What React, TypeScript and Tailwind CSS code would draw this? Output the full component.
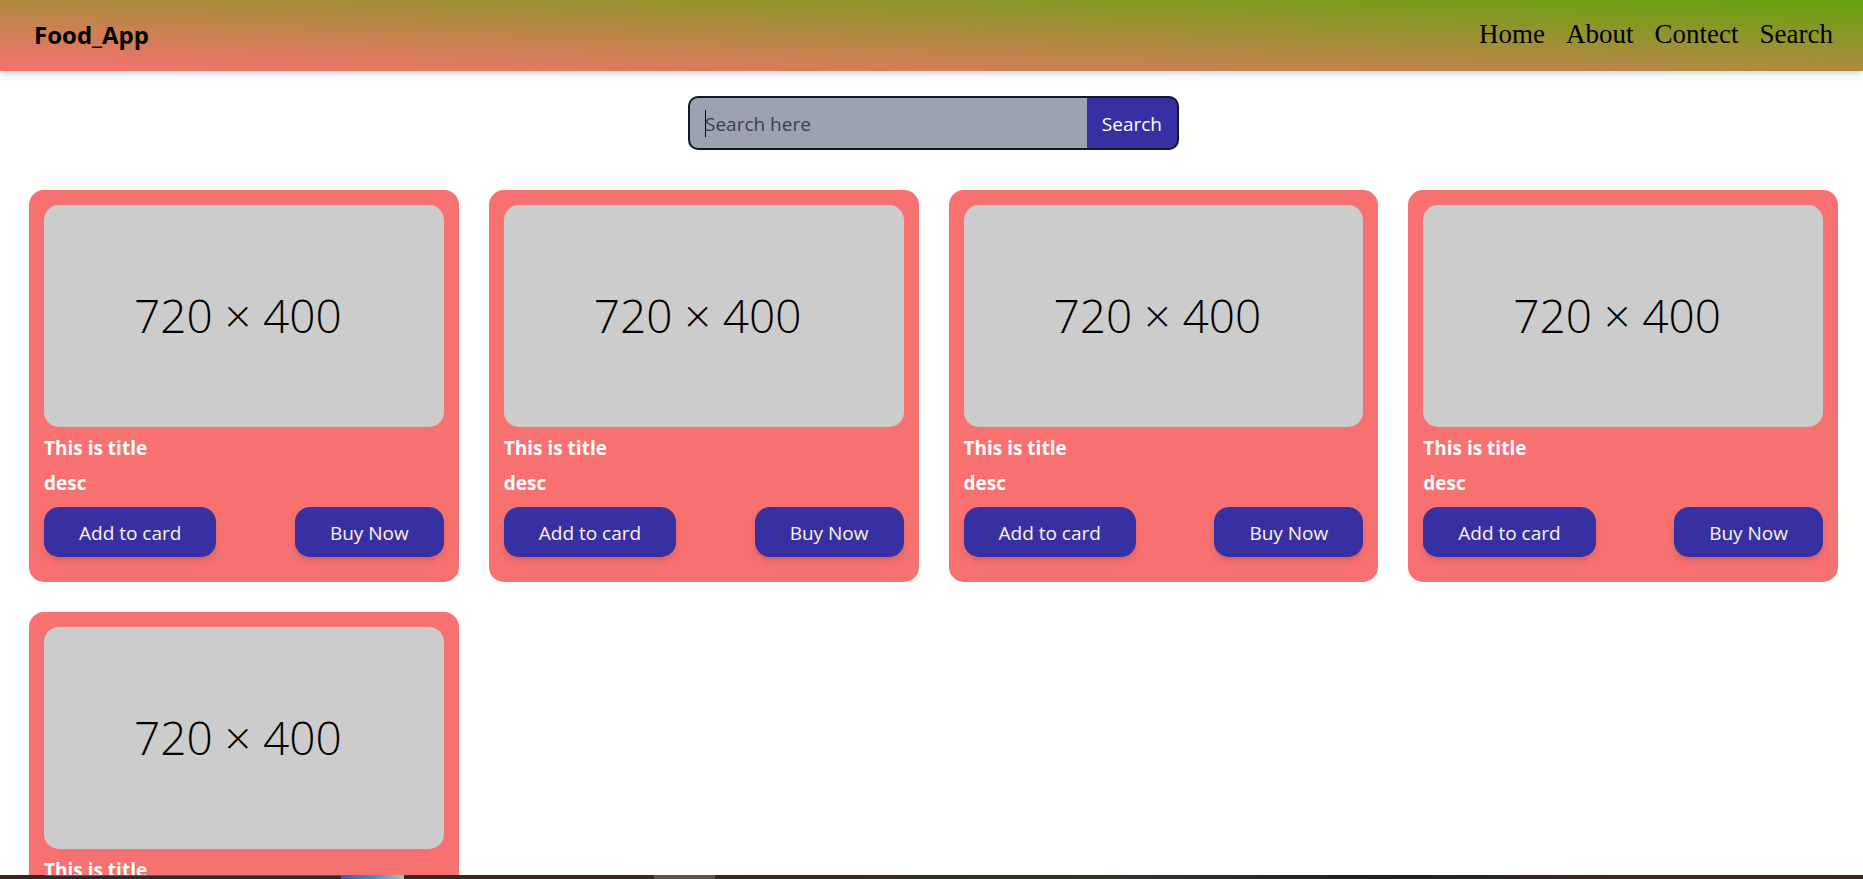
const links = ["Home", "About", "Contect", "Search"];
const products = [1, 2, 3, 4, 5].map((id) => ({ id, title: "This is title", desc: "desc" }));

function Header() {
  return (
    <header className="relative flex h-[71px] shrink-0 items-center justify-between bg-linear-to-tr/srgb from-[#f87171] to-[#65a30d] pr-[30px] pl-[34px] shadow-[0_5px_8px_-1px_rgba(0,0,0,0.1),0_3px_5px_-2px_rgba(0,0,0,0.1)]">
      <h1 className="pb-[2px] text-[24px] leading-[36px] font-bold text-black">Food_App</h1>
      <nav className="flex gap-[21px] pb-1 font-['Liberation_Serif',serif] text-[27px] leading-[36px] text-black">
        {links.map((link) => (
          <a key={link} href={`#${link.toLowerCase()}`}>
            {link}
          </a>
        ))}
      </nav>
    </header>
  );
}

function SearchBar() {
  return (
    <form
      role="search"
      onSubmit={(e) => e.preventDefault()}
      className="mx-auto flex h-[54px] w-full max-w-[491px] overflow-hidden rounded-[10px] border-2 border-[#0f172a] bg-[#0f172a]"
    >
      <div className="relative min-w-0 flex-1 bg-[#9ca3af]">
        <input
          type="text"
          aria-label="Search here"
          placeholder="Search here"
          className="h-full w-full px-[15px] pt-[2px] text-[19px] text-black caret-transparent outline-none placeholder:text-[#374151]"
        />
        <span aria-hidden="true" className="absolute top-3 left-[15px] h-[27px] w-px bg-black" />
      </div>
      <button type="submit" className="bg-[#3730a3] px-[15px] pt-[2px] text-[19px] text-white">
        Search
      </button>
    </form>
  );
}

function ActionButton({ label }: { label: string }) {
  return (
    <button
      type="button"
      className="h-[50px] rounded-[15px] bg-[#3730a3] px-[35px] pt-[2px] text-[19px] leading-[30px] text-[#fef3e2] shadow-[0_5px_8px_-1px_rgba(0,0,0,0.1),0_3px_5px_-2px_rgba(0,0,0,0.1)]"
    >
      {label}
    </button>
  );
}

function ProductCard({ title, desc }: { title: string; desc: string }) {
  return (
    <article className="rounded-[15px] bg-[#f87171] px-[15px] pt-[15px] pb-[25px]">
      <div
        role="img"
        aria-label="Placeholder"
        className="flex aspect-[720/400] items-center justify-center rounded-[15px] bg-[#cccccc] pr-3 pb-[2px] text-[46px] leading-none font-light text-black"
      >
        720 × 400
      </div>
      <div className="flex flex-col gap-[5px] pt-[6px] pb-1 text-[19px] leading-[30px] font-bold text-white">
        <h2>{title}</h2>
        <p>{desc}</p>
      </div>
      <div className="flex justify-between pt-[5px]">
        <ActionButton label="Add to card" />
        <ActionButton label="Buy Now" />
      </div>
    </article>
  );
}

export default function App() {
  return (
    <div className="flex h-dvh flex-col bg-white font-['Open_Sans',sans-serif]">
      <Header />
      <main className="min-h-0 flex-1 overflow-hidden pt-[25px] pr-[25px] pl-[29px]">
        <SearchBar />
        <section className="grid grid-cols-4 gap-[30px] pt-10">
          {products.map((p) => (
            <ProductCard key={p.id} title={p.title} desc={p.desc} />
          ))}
        </section>
      </main>
      <footer className="flex h-1 shrink-0 bg-[linear-gradient(to_right,#38241f,#35281f_35%,#35332b_60%,#1c211d_74%,#402a26_88%,#38271f)]">
        <div className="ml-[45px] h-full w-[296px] border-t border-[#5c5654] bg-[#2f2a2a]" />
        <div className="h-full w-[63px] bg-linear-to-r from-[#4a56a0] via-[#3a8fc8] to-[#a9bfc0]" />
        <div className="ml-[250px] h-full w-[61px] bg-[#5d554c]" />
      </footer>
    </div>
  );
}
